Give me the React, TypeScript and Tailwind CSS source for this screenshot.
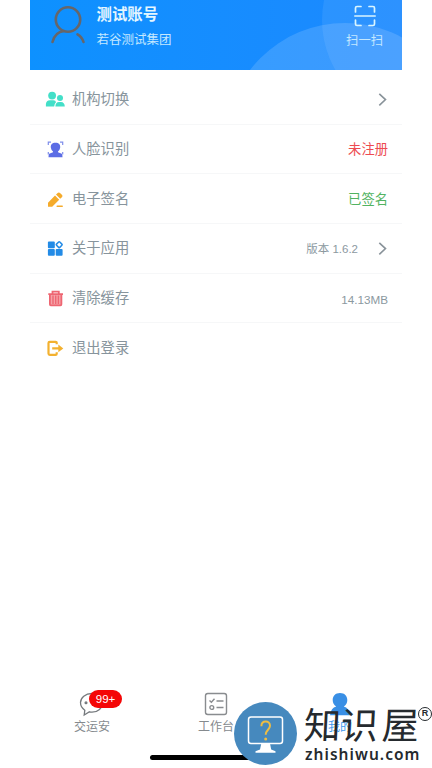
import type { ReactNode } from "react";

function Avatar() {
  return (
    <svg className="h-[40px] w-[36px] shrink-0" viewBox="0 0 36 40" fill="none" stroke="#66666a" strokeWidth="2.6" strokeLinecap="round">
      <circle cx="18" cy="14.5" r="12.2" />
      <path d="M2.5 37C4 30.5 8 26.8 14 26M27.5 29.3C30.5 31 32.5 33.5 33.5 37" />
    </svg>
  );
}

function ScanIcon() {
  return (
    <svg className="h-[22px] w-[22px]" viewBox="0 0 22 22" fill="none" stroke="#d9f5ff" strokeWidth="1.7" strokeLinecap="round">
      <path d="M1.5 7V3Q1.5 1.5 3 1.5H7M15 1.5H19Q20.5 1.5 20.5 3V7M1.5 15V19Q1.5 20.5 3 20.5H7M15 20.5H19Q20.5 20.5 20.5 19V15M.8 11H21.2" />
    </svg>
  );
}

const svgClass = "h-[18px] w-[20px] shrink-0";

const PeopleIcon = (
  <svg className={svgClass} viewBox="0 0 20 18" fill="#43dfc8">
    <circle cx="7.1" cy="5.6" r="3.9" />
    <path d="M.9 16.5V14Q1.2 10.2 5 10.2H8.5Q10.8 10.4 11 12.2Q9.4 13.5 9.2 16.5Z" />
    <circle cx="15" cy="8" r="3" />
    <path d="M10.4 16.5Q10.5 12 14 12H16Q19.5 12 19.8 16.5Z" />
  </svg>
);
const FaceIcon = (
  <svg className={svgClass} viewBox="0 0 20 18" fill="#5c6de5">
    <path d="M10.5 2.8C13.8 2.8 15.5 4.8 15.2 7.4Q14.8 10.2 13 11.4V12.3L16.8 13.8Q17.5 14.5 17.5 17.3H3.5Q3.5 14.5 4.2 13.8L8 12.3V11.4Q6.2 10.2 5.8 7.4C5.5 4.8 7.2 2.8 10.5 2.8Z" />
    <path d="M3.3 5V2.2H6M15 2.2H17.7V5M3.3 12V14.5M17.7 12V14.5" fill="none" stroke="#7f8eea" strokeWidth="1.2" />
  </svg>
);
const PencilIcon = (
  <svg className={svgClass} viewBox="0 0 20 18" fill="#f5ab2b">
    <path d="M3 12.7 10 5.6 14.2 9.8 7.2 16.8H3ZM11 4.6 13 2.8Q14 2 15 2.9L17.1 5Q17.9 6 17.1 6.9L15.2 8.8Z" />
    <path d="M12.2 16.2H17.2" stroke="#f5ab2b" strokeWidth="1.5" strokeLinecap="round" />
  </svg>
);
const AppsIcon = (
  <svg className={svgClass} viewBox="0 0 20 18" fill="#238be6">
    <rect x="2.9" y="2.5" width="6.9" height="6.7" rx="1" />
    <rect x="2.9" y="10.1" width="6.9" height="6.7" rx="1" />
    <rect x="10.7" y="10.1" width="6.9" height="6.7" rx="1" />
    <rect x="11.9" y="3.4" width="4.6" height="4.6" rx=".8" transform="rotate(45 14.2 5.7)" fill="none" stroke="#238be6" strokeWidth="1.5" />
  </svg>
);
const TrashIcon = (
  <svg className={svgClass} viewBox="0 0 20 18" fill="none" stroke="#ee6672">
    <path d="M5 5.5H16V16H5Z" fill="#f5a2a8" stroke="none" />
    <path d="M3.3 5.1H18M7.5 4.5V2.6H13.8V4.5" strokeWidth="1.8" />
    <path d="M4.9 5.5V15.3Q4.9 16.3 5.8 16.3H15.5Q16.4 16.3 16.4 15.3V5.5" strokeWidth="1.8" />
    <path d="M8 6.5V15M10.7 6.5V15M13.4 6.5V15" strokeWidth="1.4" />
  </svg>
);
const ExitIcon = (
  <svg className={svgClass} viewBox="0 0 20 18" fill="none" stroke="#f3b12f" strokeWidth="2.2" strokeLinejoin="round">
    <path d="M11.7 5.3V3.9Q11.7 2.8 10.6 2.8H4.8Q3.5 2.8 3.5 4.1V14.5Q3.5 15.8 4.8 15.8H10.6Q11.7 15.8 11.7 14.7V13.3M7.2 9.4H14.5" />
    <path d="M13.3 5.6V13.2L18.3 9.4Z" fill="#f3b12f" stroke="none" />
  </svg>
);

function Chevron() {
  return (
    <svg className="mr-[1px] h-[14px] w-[9px]" viewBox="0 0 9 14" fill="none" stroke="#89939a" strokeWidth="1.6">
      <path d="M1.3 .8 7.5 6.6 1.3 12.4" />
    </svg>
  );
}

function Row({ icon, label, children }: { icon: ReactNode; label: string; children?: ReactNode }) {
  return (
    <div className="flex h-[49.7px] items-center border-b border-[#f6f7f8] pr-[14px] pl-[15px] last:border-transparent">
      {icon}
      <span className="ml-[7px] text-[14.3px] leading-5 text-[#87949c]">{label}</span>
      <div className="ml-auto flex items-center pt-[2px]">{children}</div>
    </div>
  );
}

function ChatIcon() {
  return (
    <svg className="h-[26px] w-[26px]" viewBox="0 0 26 26" fill="none" stroke="#75797d" strokeWidth="1.3">
      <path d="M13 2.5C6.3 2.5 1.5 6.5 1.5 11.6Q1.5 16.3 5.8 19.2L5.2 24 10.5 20.8Q12 21.1 13 21.1C19 21.1 23.5 17 23.5 11.8S19 2.5 13 2.5Z" />
      <circle cx="7" cy="11.8" r=".9" fill="#75797d" />
      <circle cx="13" cy="11.8" r=".8" fill="#75797d" />
    </svg>
  );
}

function TaskIcon() {
  return (
    <svg className="h-[26px] w-[26px]" viewBox="0 0 26 26" fill="none" stroke="#898c8f" strokeWidth="1.4">
      <rect x="2.5" y="2.5" width="21" height="21" rx="2.3" />
      <path d="M6.5 9.5 8.4 11.3 11.5 7.8M13.5 10H20.5M13.5 16.5H20.5" />
      <circle cx="8.8" cy="16.5" r="1.9" />
    </svg>
  );
}

function Watermark() {
  return (
    <div className="absolute top-[701px] left-[234px] flex w-[198px]">
      <svg className="h-[65px] w-[63px] shrink-0" viewBox="0 0 63 65" fill="none">
        <circle cx="31.5" cy="32.5" r="31.5" fill="#4689be" />
        <rect x="14.5" y="16" width="34" height="26.5" rx="2.5" stroke="white" strokeWidth="1.5" />
        <path d="M27.3 42.5H36L37.2 48.5 41.5 50.3V51.7H21.5V50.3L26 48.5Z" fill="white" />
        <path d="M27.4 25.2C27.4 18.8 36 19.2 36 24.8C36 28.7 31.7 29 31.7 33.8" stroke="#efbd43" strokeWidth="2" />
        <circle cx="31.7" cy="38" r="1.5" fill="#efbd43" />
      </svg>
      <div className="ml-[7px] text-[#252a2e]">
        <div className="flex h-[43px] items-center font-['Noto_Sans_CJK_SC',sans-serif] text-[37px] leading-[42px] font-normal whitespace-nowrap">
          <span className="flex w-[115px] -skew-x-3 justify-between"><span>知识</span><span>屋</span></span>
          <span className="-mt-[18px] -ml-[1px] flex h-[14px] w-[14px] shrink-0 items-center justify-center rounded-full border-[1.3px] border-[#252a2e] font-['Liberation_Sans',sans-serif] text-[9px] leading-none font-bold">R</span>
        </div>
        <div className="ml-[1px] font-['Noto_Sans',sans-serif] text-[15.5px] leading-[20px] font-semibold tracking-[1.05px]">zhishiwu.com</div>
      </div>
    </div>
  );
}

export default function App() {
  return (
    <div className="relative h-[768px] w-[432px] overflow-hidden bg-white font-['Liberation_Sans','Noto_Sans_CJK_SC',sans-serif]">
      <main className="mx-auto flex h-full w-[372px] flex-col">
        <header className="relative flex h-[70px] overflow-hidden bg-gradient-to-r from-[#0d91ff] to-[#1c89ff]">
          <svg className="absolute inset-0 h-full w-full" viewBox="0 0 372 70" fill="white">
            <circle cx="315" cy="142.5" r="119.5" fillOpacity=".14" />
            <circle cx="392" cy="20" r="100" fillOpacity=".08" />
          </svg>
          <div className="relative flex w-full pl-[20px]">
            <div className="mt-[5px]"><Avatar /></div>
            <div className="mt-[4px] ml-[10.5px] flex flex-col">
              <span className="text-[15.4px] leading-[21px] font-bold text-[#e4f6ff]">测试账号</span>
              <span className="mt-[6px] text-[12.5px] leading-[18px] text-[#c4e8ff]">若谷测试集团</span>
            </div>
            <div className="mt-[5px] mr-[19px] ml-auto flex flex-col items-center text-[#c4e8ff]">
              <ScanIcon />
              <span className="mt-[6px] text-[12.3px] leading-[17px]">扫一扫</span>
            </div>
          </div>
        </header>
        <section className="mt-[5px]">
          <Row icon={PeopleIcon} label="机构切换"><Chevron /></Row>
          <Row icon={FaceIcon} label="人脸识别"><span className="text-[13.3px] text-[#ed4b50]">未注册</span></Row>
          <Row icon={PencilIcon} label="电子签名"><span className="text-[13.3px] text-[#51b361]">已签名</span></Row>
          <Row icon={AppsIcon} label="关于应用">
            <span className="mr-[20px] pt-[1px] text-[11.5px] text-[#8c999f]">版本 1.6.2</span><Chevron />
          </Row>
          <Row icon={TrashIcon} label="清除缓存"><span className="pt-[1px] text-[11.7px] text-[#8c999f]">14.13MB</span></Row>
          <Row icon={ExitIcon} label="退出登录" />
        </section>
        <footer className="mt-auto h-[77px]">
          <nav className="grid grid-cols-3 text-[12px] leading-[18px] text-[#858a8e]">
            <div className="flex flex-col items-center">
              <div className="relative">
                <ChatIcon />
                <span className="absolute -top-[1px] left-[10px] flex h-[18px] w-[33px] items-center justify-center rounded-full bg-[#f40707] text-[11.5px] text-white">99+</span>
              </div>
              <span className="mt-[1px]">交运安</span>
            </div>
            <div className="flex flex-col items-center"><TaskIcon /><span className="mt-[1px]">工作台</span></div>
            <div className="flex flex-col items-center text-[#4097ed]">
              <svg className="h-[26px] w-[26px]" viewBox="0 0 26 26" fill="#398fe5">
                <path d="M13 2C17.5 2 20.3 4.8 20.3 9Q20.3 13 16.8 15.6Q22 17 23 24.2H3Q4 17 9.2 15.6Q5.7 13 5.7 9C5.7 4.8 8.5 2 13 2Z" />
              </svg>
              <span className="mt-[1px]">我的</span>
            </div>
          </nav>
          <div className="mx-auto mt-[19px] h-[5px] w-[132px] rounded-full bg-black" />
        </footer>
      </main>
      <Watermark />
    </div>
  );
}
